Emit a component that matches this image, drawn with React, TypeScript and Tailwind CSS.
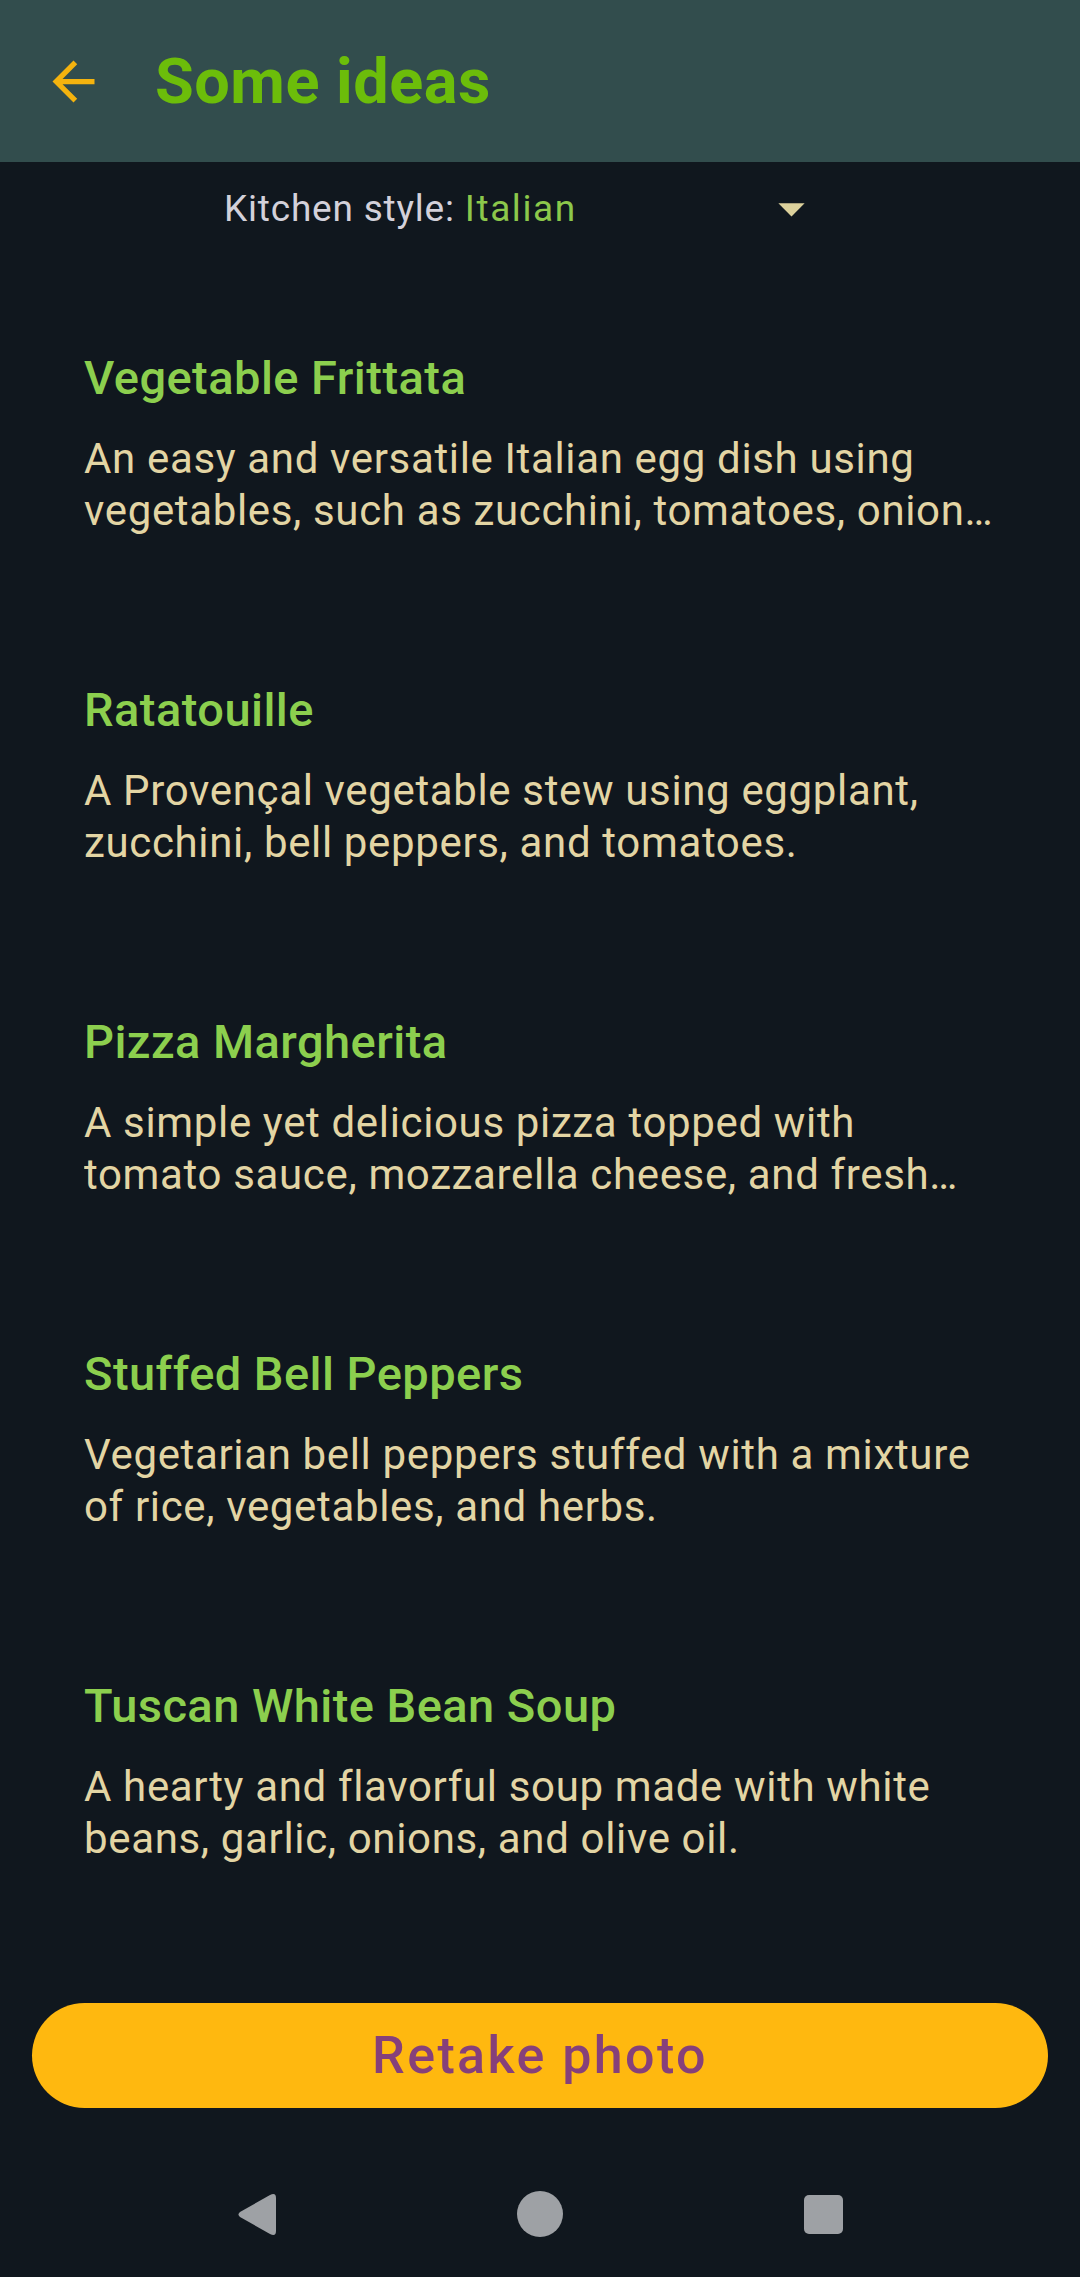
const ideas = [
  {
    title: 'Vegetable Frittata',
    text: 'An easy and versatile Italian egg dish using vegetables, such as zucchini, tomatoes, onions, and bell peppers.',
  },
  {
    title: 'Ratatouille',
    text: 'A Provençal vegetable stew using eggplant, zucchini, bell peppers, and tomatoes.',
  },
  {
    title: 'Pizza Margherita',
    text: 'A simple yet delicious pizza topped with tomato sauce, mozzarella cheese, and fresh basil leaves.',
  },
  {
    title: 'Stuffed Bell Peppers',
    text: 'Vegetarian bell peppers stuffed with a mixture of rice, vegetables, and herbs.',
  },
  {
    title: 'Tuscan White Bean Soup',
    text: 'A hearty and flavorful soup made with white beans, garlic, onions, and olive oil.',
  },
];

function BackArrow() {
  return (
    <svg viewBox="0 0 24 24" className="w-[63px] h-[63px]" fill="#f4b30e">
      <path d="M20 11H7.83l5.59-5.59L12 4l-8 8 8 8 1.41-1.41L7.83 13H20v-2z" />
    </svg>
  );
}

function DropArrow() {
  return (
    <svg viewBox="0 0 24 24" className="w-[63px] h-[63px]" fill="#dcd19c">
      <path d="M7 10l5 5 5-5z" />
    </svg>
  );
}

export default function App() {
  return (
    <div
      className="h-[2277px] w-[1080px] flex flex-col bg-[#10171e] overflow-hidden"
      style={{ fontFamily: 'Roboto, "Noto Sans", sans-serif' }}
    >
      {/* top bar */}
      <header className="h-[162px] shrink-0 bg-[#324d4d] flex items-center pl-[42px]">
        <BackArrow />
        <h1 className="ml-[50px] text-[63px] leading-[63px] font-bold tracking-[0.5px] text-[#6cbd0a]">Some ideas</h1>
      </header>

      {/* kitchen style picker */}
      <div className="h-[92px] shrink-0 flex items-center pl-[224px]">
        <div className="w-[599px] flex items-center">
          <span className="text-[37px] leading-[49px] tracking-[0.8px] text-[#d3d1da]">Kitchen style:</span>
          <span className="ml-[10px] text-[37px] leading-[49px] tracking-[1.6px] text-[#8cc84b]">Italian</span>
          <div className="ml-auto">
            <DropArrow />
          </div>
        </div>
      </div>

      {/* ideas */}
      <div className="flex-1 overflow-hidden px-[84px] pt-[92px]">
        <div className="flex flex-col gap-[141px]">
          {ideas.map((idea) => (
            <div key={idea.title}>
              <h2 className="text-[47px] leading-[63px] font-medium tracking-[0.45px] text-[#8ccf4e]">{idea.title}</h2>
              <p className="mt-[24px] text-[42px] leading-[52px] tracking-[0.65px] text-[#e3d5a4] line-clamp-2">{idea.text}</p>
            </div>
          ))}
        </div>
      </div>

      {/* retake button */}
      <div className="shrink-0 px-[32px]">
        <button className="w-full h-[105px] rounded-full bg-[#ffb80f] flex items-center justify-center">
          <span className="text-[52px] font-medium tracking-[2.4px] text-[#86407a]">Retake photo</span>
        </button>
      </div>

      {/* system nav bar */}
      <div className="shrink-0 mt-[43px] h-[126px] flex items-center justify-center gap-[241px]">
        <svg viewBox="0 0 39 43" className="w-[39px] h-[43px]" fill="#9ea1a5">
          <path d="M33 2 Q39 -1 39 5 L39 38 Q39 44 33 41 L3 24 Q0 21.5 3 19 Z" />
        </svg>
        <div className="w-[46px] h-[46px] rounded-full bg-[#9ea1a5]" />
        <div className="w-[39px] h-[39px] rounded-[5px] bg-[#9ea1a5]" />
      </div>
    </div>
  );
}
